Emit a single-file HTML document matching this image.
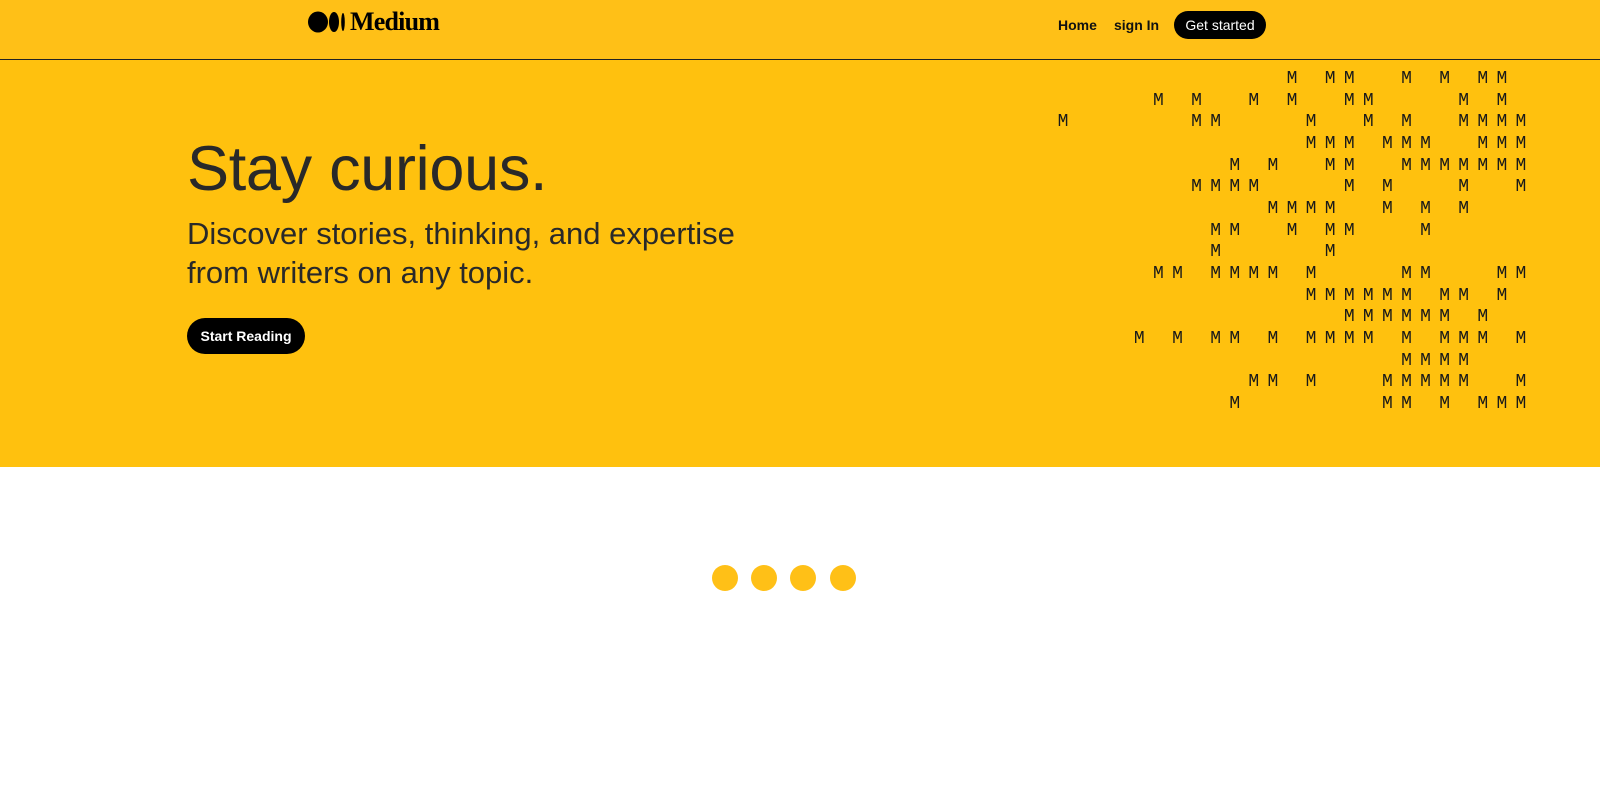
<!DOCTYPE html>
<html><head><meta charset="utf-8"><style>
*{margin:0;padding:0;box-sizing:border-box}
body{width:1600px;height:787px;background:#fff;font-family:"Liberation Sans",sans-serif;position:relative;overflow:hidden}
.nav{position:absolute;left:0;top:0;width:1600px;height:60px;background:#FFC017;border-bottom:1px solid #222}
.hero{position:absolute;left:0;top:60px;width:1600px;height:407px;background:#FFC10E}
.logo{position:absolute;left:308px;top:9px;height:26px;display:flex;align-items:center}
.logo span{font-family:"Liberation Serif",serif;font-weight:bold;font-size:26px;color:#000;margin-left:4px;letter-spacing:-0.8px}
.nl{position:absolute;top:17px;font-size:14px;font-weight:bold;color:#111}
.gs{position:absolute;left:1174px;top:11px;width:92px;height:28px;border-radius:14px;background:#000;color:#fff;font-size:14px;text-align:center;line-height:28px}
h1{position:absolute;left:187px;top:133px;font-size:63px;font-weight:normal;color:#292929;letter-spacing:-0.3px}
.sub{position:absolute;left:187px;top:214px;font-size:31px;line-height:39px;color:#292929;width:600px}
.btn{position:absolute;left:187px;top:318px;width:118px;height:36px;border-radius:18px;background:#000;color:#fff;font-size:14px;font-weight:bold;text-align:center;line-height:36px}
.ms{position:absolute;left:1057.6px;top:69px;font-family:"Liberation Mono",monospace;font-size:18px;letter-spacing:8.28px;line-height:21.67px;white-space:pre;color:#1a1a1a}
.dot{position:absolute;top:565px;width:26px;height:26px;border-radius:50%;background:#FFC017}
</style></head><body>
<div class="nav"></div>
<div class="hero"></div>
<div class="logo"><svg width="38" height="22" viewBox="0 0 38 22"><ellipse cx="10" cy="11" rx="10" ry="10.5" fill="#000"/><ellipse cx="26" cy="11" rx="5" ry="10" fill="#000"/><ellipse cx="35" cy="11" rx="1.8" ry="9" fill="#000"/></svg><span>Medium</span></div>
<div class="nl" style="left:1058px">Home</div>
<div class="nl" style="left:1114px">sign In</div>
<div class="gs">Get started</div>
<h1>Stay curious.</h1>
<div class="sub">Discover stories, thinking, and expertise from writers on any topic.</div>
<div class="btn">Start Reading</div>
<div class="ms">            M MM  M M MM 
     M M  M M  MM    M M 
M      MM    M  M M  MMMM
             MMM MMM  MMM
         M M  MM  MMMMMMM
       MMMM    M M   M  M
           MMMM  M M M   
        MM  M MM   M     
        M     M          
     MM MMMM M    MM   MM
             MMMMMM MM M 
               MMMMMM M  
    M M MM M MMMM M MMM M
                  MMMM   
          MM M   MMMMM  M
         M       MM M MMM</div>
<div class="dot" style="left:712px"></div>
<div class="dot" style="left:751px"></div>
<div class="dot" style="left:790px"></div>
<div class="dot" style="left:830px"></div>
</body></html>
